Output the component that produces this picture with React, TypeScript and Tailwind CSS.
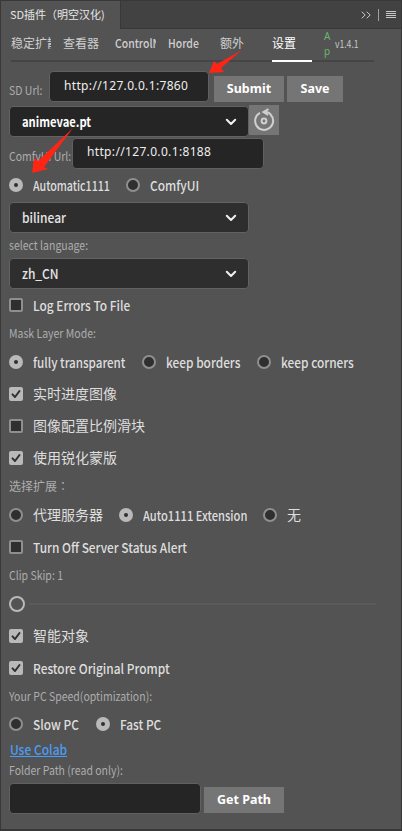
import type { ReactNode } from 'react'

const sans = "font-['Noto_Sans_CJK_SC',sans-serif]"

function Arrow({ d, className }: { d: string; className: string }) {
  return (
    <svg viewBox="0 0 46 50" className={`absolute h-[50px] w-[46px] ${className}`}>
      <path d={d} fill="#ff2414" />
    </svg>
  )
}

function Radio({ on = false }: { on?: boolean }) {
  return on ? (
    <span className="flex size-[14px] shrink-0 items-center justify-center rounded-full bg-[#b9b9b9]">
      <span className="size-1 rounded-full bg-[#303030]" />
    </span>
  ) : (
    <span className="size-[14px] shrink-0 rounded-full border-2 border-[#8f8f8f] bg-[#2f2f2f]" />
  )
}

function Box({ on = false }: { on?: boolean }) {
  return on ? (
    <span className="flex size-[14px] shrink-0 items-center justify-center rounded-[2px] bg-[#b9b9b9]">
      <svg viewBox="0 0 14 14" className="size-[14px]" fill="none" stroke="#303030" strokeWidth="2" strokeLinecap="round" strokeLinejoin="round">
        <path d="M3.5 7.4 6 10l4.5-6" />
      </svg>
    </span>
  ) : (
    <span className="size-[14px] shrink-0 rounded-[2px] border-2 border-[#8f8f8f] bg-[#2f2f2f]" />
  )
}

const latin = 'text-[13.5px] font-medium'
const cjk = 'mb-[2px] text-[14px] font-normal'

function Option({ radio = false, on, width = '', text, children }: { radio?: boolean; on?: boolean; width?: string; text?: string; children: ReactNode }) {
  return (
    <label className={`flex items-center gap-[10px] ${width}`}>
      {radio ? <Radio on={on} /> : <Box on={on} />}
      <span className={`w-0 origin-left leading-5 whitespace-nowrap text-[#dedede] ${text ?? `scale-x-[0.88] ${latin}`}`}>{children}</span>
    </label>
  )
}

function Row({ children, className = '' }: { children: ReactNode; className?: string }) {
  return <div className={`flex h-8 items-center ${className}`}>{children}</div>
}

function Label({ children, className = '' }: { children: ReactNode; className?: string }) {
  return (
    <div className={`flex h-6 shrink-0 items-center text-[12px] leading-4 whitespace-nowrap text-[#adadad] ${className}`}>
      <span className="w-0 origin-left scale-x-[0.875]">{children}</span>
    </div>
  )
}

function Select({ children, dark = false }: { children: ReactNode; dark?: boolean }) {
  return (
    <div className={`flex h-[31px] w-[240px] items-center justify-between rounded-[4px] border border-[#626262] pr-[11px] pl-3 text-[13.5px] ${dark ? 'bg-[#252525] font-bold text-white' : 'bg-[#2e2e2e] font-medium text-[#e6e6e6]'}`}>
      <span className={`origin-left ${dark ? 'scale-x-[0.83]' : 'scale-x-[0.89]'}`}>{children}</span>
      <svg viewBox="0 0 12 8" className="h-2 w-3" fill="none" stroke="#f0f0f0" strokeWidth="2" strokeLinecap="round" strokeLinejoin="round">
        <path d="M1.8 1.8 6 6l4.2-4.2" />
      </svg>
    </div>
  )
}

function Field({ children, className }: { children?: ReactNode; className: string }) {
  return (
    <div className={`flex h-[31px] items-center rounded-[4px] border border-[#606060] bg-[#252525] pl-[14px] font-['Noto_Sans',sans-serif] text-[12px] tracking-[0.34px] text-[#eeeeee] ${className}`}>
      {children}
    </div>
  )
}

function Button({ children, className }: { children: ReactNode; className: string }) {
  return (
    <button className={`flex h-[26px] items-center justify-center bg-[#757575] font-['Noto_Sans',sans-serif] text-[12.5px] font-bold text-white ${className}`}>
      {children}
    </button>
  )
}

export default function App() {
  return (
    <div className={`relative flex h-[831px] w-[402px] flex-col overflow-hidden border-t border-r border-b-2 border-l border-[#383838] bg-[#535353] ${sans}`}>
      <header className="flex h-7 shrink-0 bg-[#424242]">
        <div className="w-[120px] shrink-0 border-r border-[#383838] bg-[#535353] pl-[9px] text-[11px] leading-[26px] whitespace-nowrap text-[#e6e6e6]">
          SD插件（明空汉化)
        </div>
        <div className="flex flex-1 items-center justify-end gap-[7px] border-b border-[#383838] pr-[5px]">
          <svg viewBox="0 0 10 8" className="h-2 w-[10px]" fill="none" stroke="#c8c8c8">
            <path d="m.7.7 3.5 3.3L.7 7.3M5.7.7 9.2 4 5.7 7.3" />
          </svg>
          <span className="h-3 w-px bg-[#a0a0a0]" />
          <svg viewBox="0 0 10 8" className="h-2 w-[10px]" stroke="#c8c8c8">
            <path d="M0 .5h10M0 2.5h10M0 4.5h10M0 6.5h10" />
          </svg>
        </div>
      </header>

      <nav className="ml-[10px] flex h-[33px] w-[363px] shrink-0 border-b-2 border-[#454545] text-[12px] leading-[28px] whitespace-nowrap text-[#cfcfcf]">
        <div className="w-10 overflow-hidden">稳定扩散</div>
        <div className="ml-3 w-10">查看器</div>
        <div className="ml-3 w-[41px] overflow-hidden font-medium">
          <div className="w-12 origin-left scale-x-[0.87]">ControlNet</div>
        </div>
        <div className="ml-3 w-10 origin-left scale-x-[0.87] font-medium">Horde</div>
        <div className="ml-3 w-10">额外</div>
        <div className="ml-3 h-[33px] w-10 border-b-2 border-white text-white">设置</div>
        <div className="ml-3 w-[11px] font-['Noto_Sans',sans-serif] text-[10px] leading-[15px] text-[#68b76c]">
          A
          <br />p
        </div>
        <div className="origin-left scale-x-[0.78] text-[11px] leading-[29px] text-[#c8c8c8]">v1.4.1</div>
      </nav>

      <main className="flex flex-col pt-[9px] pl-2">
        <div className="flex h-[34px]">
          <Label className="w-10 pt-[14px]">SD Url:</Label>
          <Field className="w-[160px] pb-[2px]">http://127.0.0.1:7860</Field>
          <Button className="mt-[5px] ml-[5px] w-[70px]">Submit</Button>
          <Button className="mt-[5px] ml-[3px] w-[56px]">Save</Button>
        </div>
        <div className="flex h-8">
          <div className="pt-px"><Select dark>animevae.pt</Select></div>
          <button className="flex h-[30px] w-[30px] items-center justify-center bg-[#757575]">
            <svg viewBox="0 0 22 24" className="h-6 w-[22px]" fill="none" stroke="#cfcfcf" strokeWidth="2">
              <path d="M17.5 6.5A9 9 0 1 1 7 4.9" />
              <circle cx="11" cy="13" r="2.4" />
              <path d="M15.5 1.2 10.5 4l4.6 3M10.5 4h2.8c2 0 3.3 1 4.5 2.6" />
            </svg>
          </button>
        </div>
        <div className="flex h-[32px] pt-px">
          <Label className="w-[63px] pt-[12px]">ComfyUI Url:</Label>
          <Field className="w-[192px] pb-[3px]">http://127.0.0.1:8188</Field>
        </div>
        <Row>
          <Option radio on width="w-[117px]" text={`scale-x-[0.79] ${latin}`}>Automatic1111</Option>
          <Option radio>ComfyUI</Option>
        </Row>
        <div className="pt-px"><Select>bilinear</Select></div>
        <Label>select language:</Label>
        <div className="pt-px"><Select>zh_CN</Select></div>
        <Row><Option>Log Errors To File</Option></Row>
        <Label>Mask Layer Mode:</Label>
        <Row className="mt-px">
          <Option radio on width="w-[133px]" text={`scale-x-[0.86] ${latin}`}>fully transparent</Option>
          <Option radio width="w-[115px]">keep borders</Option>
          <Option radio>keep corners</Option>
        </Row>
        <Row><Option on text={cjk}>实时进度图像</Option></Row>
        <Row><Option text={cjk}>图像配置比例滑块</Option></Row>
        <Row><Option on text={cjk}>使用锐化蒙版</Option></Row>
        <div className="flex h-6 items-center text-[12px] leading-4 text-[#adadad]">
          选择扩展<span className="font-['Noto_Sans_CJK_TC',sans-serif]" lang="zh-TW">：</span>
        </div>
        <Row className="mt-px">
          <Option radio width="w-[110px]" text={cjk}>代理服务器</Option>
          <Option radio on width="w-[144px]" text={`scale-x-[0.825] ${latin}`}>Auto1111 Extension</Option>
          <Option radio text={cjk}>无</Option>
        </Row>
        <Row><Option>Turn Off Server Status Alert</Option></Row>
        <Label>Clip Skip: 1</Label>
        <div className="mt-px flex h-8 items-center gap-1">
          <span className="size-4 rounded-full border-2 border-[#b9b9b9]" />
          <span className="h-[2px] w-[347px] bg-[#5b5b5b]" />
        </div>
        <Row><Option on text={cjk}>智能对象</Option></Row>
        <Row><Option on>Restore Original Prompt</Option></Row>
        <Label>Your PC Speed(optimization):</Label>
        <Row>
          <Option radio width="w-[87px]">Slow PC</Option>
          <Option radio on>Fast PC</Option>
        </Row>
        <a className="flex h-[18px] w-[67px] origin-left scale-x-[0.89] items-center pl-px text-[13.5px] font-medium whitespace-nowrap text-[#4b9cf5] underline">Use Colab</a>
        <Label>Folder Path (read only):</Label>
        <div className="flex pt-px">
          <Field className="w-[192px]" />
          <Button className="mt-1 ml-[3px] w-[80px]">Get Path</Button>
        </div>
      </main>

      <Arrow className="top-[48px] left-[206px]" d="M2 24 7 12 10 15 35 1 14 19 17 23Z" />
      <Arrow className="top-[126px] left-[29px]" d="M2 46 4 31 8 34 43 1 14 40 18 42Z" />
    </div>
  )
}
